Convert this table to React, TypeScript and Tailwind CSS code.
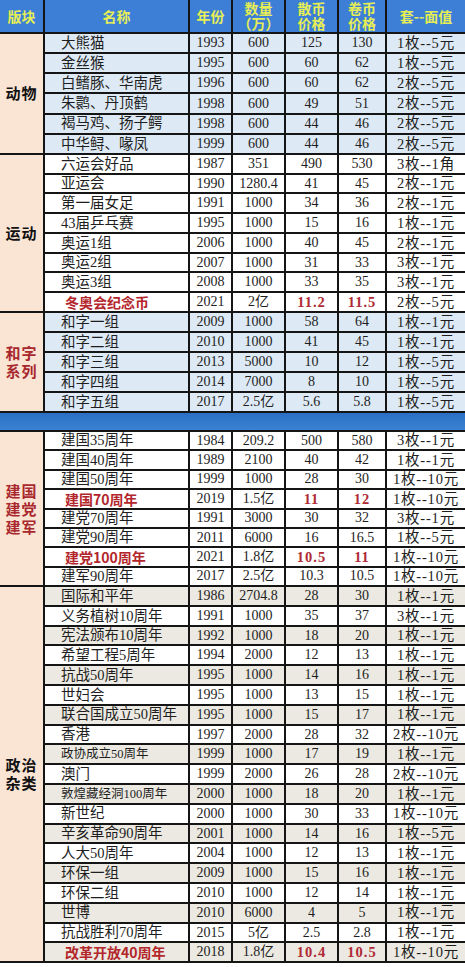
import React from "react";

type Row = {
  name: string;
  year: string;
  qty: string;
  s: string;
  r: string;
  face: string;
  red?: boolean;
  redNums?: boolean;
  small?: boolean;
  bg: string;
};

const BLUE = "bg-[#dde9f4]";
const WHITE = "bg-white";
const GRAY = "bg-[#ebe9e1]";

const mk = (
  bg: string,
  arr: [string, string, string, string, string, string, number?][]
): Row[] =>
  arr.map(([name, year, qty, s, r, face, flag]) => ({
    name,
    year,
    qty,
    s,
    r,
    face,
    red: flag === 1,
    redNums: flag === 1,
    small: flag === 2,
    bg,
  }));

const animals = mk(BLUE, [
  ["大熊猫", "1993", "600", "125", "130", "1枚--5元"],
  ["金丝猴", "1995", "600", "60", "62", "1枚--5元"],
  ["白鳍豚、华南虎", "1996", "600", "60", "62", "2枚--5元"],
  ["朱鹮、丹顶鹤", "1998", "600", "49", "51", "2枚--5元"],
  ["褐马鸡、扬子鳄", "1998", "600", "44", "46", "2枚--5元"],
  ["中华鲟、喙凤", "1999", "600", "44", "46", "2枚--5元"],
]);

const sports = mk(WHITE, [
  ["六运会好品", "1987", "351", "490", "530", "3枚--1角"],
  ["亚运会", "1990", "1280.4", "41", "45", "2枚--1元"],
  ["第一届女足", "1991", "1000", "34", "36", "2枚--1元"],
  ["43届乒乓赛", "1995", "1000", "15", "16", "1枚--1元"],
  ["奥运1组", "2006", "1000", "40", "45", "2枚--1元"],
  ["奥运2组", "2007", "1000", "31", "33", "3枚--1元"],
  ["奥运3组", "2008", "1000", "33", "35", "3枚--1元"],
  ["冬奥会纪念币", "2021", "2亿", "11.2", "11.5", "2枚--5元", 1],
]);

const hezi = mk(BLUE, [
  ["和字一组", "2009", "1000", "58", "64", "1枚--1元"],
  ["和字二组", "2010", "1000", "41", "45", "1枚--1元"],
  ["和字三组", "2013", "5000", "10", "12", "1枚--5元"],
  ["和字四组", "2014", "7000", "8", "10", "1枚--5元"],
  ["和字五组", "2017", "2.5亿", "5.6", "5.8", "1枚--5元"],
]);

const jianguo = mk(WHITE, [
  ["建国35周年", "1984", "209.2", "500", "580", "3枚--1元"],
  ["建国40周年", "1989", "2100", "40", "42", "1枚--1元"],
  ["建国50周年", "1999", "1000", "28", "30", "1枚--10元"],
  ["建国70周年", "2019", "1.5亿", "11", "12", "1枚--10元", 1],
  ["建党70周年", "1991", "3000", "30", "32", "3枚--1元"],
  ["建党90周年", "2011", "6000", "16", "16.5", "1枚--5元"],
  ["建党100周年", "2021", "1.8亿", "10.5", "11", "1枚--10元", 1],
  ["建军90周年", "2017", "2.5亿", "10.3", "10.5", "1枚--10元"],
]);

const politicsRaw: [string, string, string, string, string, string, number?][] = [
  ["国际和平年", "1986", "2704.8", "28", "30", "1枚--1元"],
  ["义务植树10周年", "1991", "1000", "35", "37", "3枚--1元"],
  ["宪法颁布10周年", "1992", "1000", "18", "20", "1枚--1元"],
  ["希望工程5周年", "1994", "2000", "12", "13", "1枚--1元"],
  ["抗战50周年", "1995", "1000", "14", "16", "1枚--1元"],
  ["世妇会", "1995", "1000", "13", "15", "1枚--1元"],
  ["联合国成立50周年", "1995", "1000", "15", "17", "1枚--1元"],
  ["香港", "1997", "2000", "28", "32", "2枚--10元"],
  ["政协成立50周年", "1999", "1000", "17", "19", "1枚--1元", 2],
  ["澳门", "1999", "2000", "26", "28", "2枚--10元"],
  ["敦煌藏经洞100周年", "2000", "1000", "18", "20", "1枚--1元", 2],
  ["新世纪", "2000", "1000", "30", "33", "1枚--10元"],
  ["辛亥革命90周年", "2001", "1000", "14", "16", "1枚--5元"],
  ["人大50周年", "2004", "1000", "12", "13", "1枚--1元"],
  ["环保一组", "2009", "1000", "15", "16", "1枚--1元"],
  ["环保二组", "2010", "1000", "12", "14", "1枚--1元"],
  ["世博", "2010", "6000", "4", "5", "1枚--1元"],
  ["抗战胜利70周年", "2015", "5亿", "2.5", "2.8", "1枚--1元"],
  ["改革开放40周年", "2018", "1.8亿", "10.4", "10.5", "1枚--10元", 1],
];

const politics: Row[] = politicsRaw.flatMap((r, i) =>
  mk(i % 2 === 0 ? GRAY : WHITE, [r])
);

const cellFont = "font-['Liberation_Serif','Noto_Sans_CJK_SC',serif]";
const boldFont = "font-['Noto_Sans_CJK_SC','Liberation_Sans',sans-serif] font-bold";

function DataRow({ row }: { row: Row }) {
  const base = `${row.bg} flex items-center justify-center text-[#1e1e1e] ${cellFont}`;
  const num = `${base} text-[14px] leading-none`;
  const redNum = `${row.bg} flex items-center justify-center font-['Liberation_Serif','Noto_Sans_CJK_SC',serif] font-bold text-[14.5px] leading-none text-[#b02a35] tracking-[1px]`;
  return (
    <>
      <div
        className={
          row.red
            ? `${row.bg} flex items-center pl-[20px] ${boldFont} text-[14px] leading-none text-[#b3262c] whitespace-nowrap`
            : `${row.bg} flex items-center pl-[16px] whitespace-nowrap leading-none text-[#1e1e1e] ${cellFont} ${
                row.small ? "text-[12.5px]" : "text-[14.5px]"
              }`
        }
      >
        {row.name}
      </div>
      <div className={num}>{row.year}</div>
      <div className={num}>{row.qty}</div>
      <div className={row.redNums ? redNum : num}>{row.s}</div>
      <div className={row.redNums ? redNum : num}>{row.r}</div>
      <div className={`${base} text-[14.5px] leading-none tracking-[0.8px] whitespace-nowrap`}>
        {row.face}
      </div>
    </>
  );
}

function Block({
  span,
  lines,
  red,
}: {
  span: string;
  lines: string[];
  red?: boolean;
}) {
  return (
    <div
      className={`${span} col-start-1 bg-[#fae4d4] flex flex-col items-center justify-center ${boldFont} text-[15px] leading-[18px] tracking-[1px] ${
        red ? "text-[#a8282e]" : "text-[#111]"
      }`}
    >
      {lines.map((l) => (
        <span key={l}>{l}</span>
      ))}
    </div>
  );
}

function Head({ lines }: { lines: string[] }) {
  return (
    <div
      className={`bg-[#3d7fd6] flex flex-col items-center justify-center ${boldFont} text-[14px] leading-[15px] text-[#e6ee55] whitespace-nowrap`}
    >
      {lines.map((l) => (
        <span key={l} className="block h-[15px] leading-[15px]">
          {l}
        </span>
      ))}
    </div>
  );
}

export default function App() {
  return (
    <div className="w-[465px] h-[967px] bg-white overflow-hidden">
      <div className="grid grid-cols-[43px_143px_41px_51px_51px_46px_78px] grid-rows-[32px_repeat(6,18.17px)_repeat(8,17.75px)_repeat(5,18px)_17px_repeat(8,17.4px)_repeat(19,17.8px)] gap-[2px] bg-[#151515] pb-[2px]">
        <Head lines={["版块"]} />
        <Head lines={["名称"]} />
        <Head lines={["年份"]} />
        <Head lines={["数量", "（万）"]} />
        <Head lines={["散币", "价格"]} />
        <Head lines={["卷币", "价格"]} />
        <Head lines={["套--面值"]} />

        <Block span="row-span-6" lines={["动物"]} />
        {animals.map((r) => (
          <DataRow key={r.name} row={r} />
        ))}

        <Block span="row-span-8" lines={["运动"]} />
        {sports.map((r) => (
          <DataRow key={r.name} row={r} />
        ))}

        <Block span="row-span-5" lines={["和字", "系列"]} red />
        {hezi.map((r) => (
          <DataRow key={r.name} row={r} />
        ))}

        <div className="col-span-7 bg-gradient-to-b from-[#2a6fc4] to-[#3a82d4]" />

        <Block span="row-span-8" lines={["建国", "建党", "建军"]} red />
        {jianguo.map((r) => (
          <DataRow key={r.name} row={r} />
        ))}

        <Block span="row-span-19" lines={["政治", "杂类"]} />
        {politics.map((r) => (
          <DataRow key={r.name} row={r} />
        ))}
      </div>
    </div>
  );
}
